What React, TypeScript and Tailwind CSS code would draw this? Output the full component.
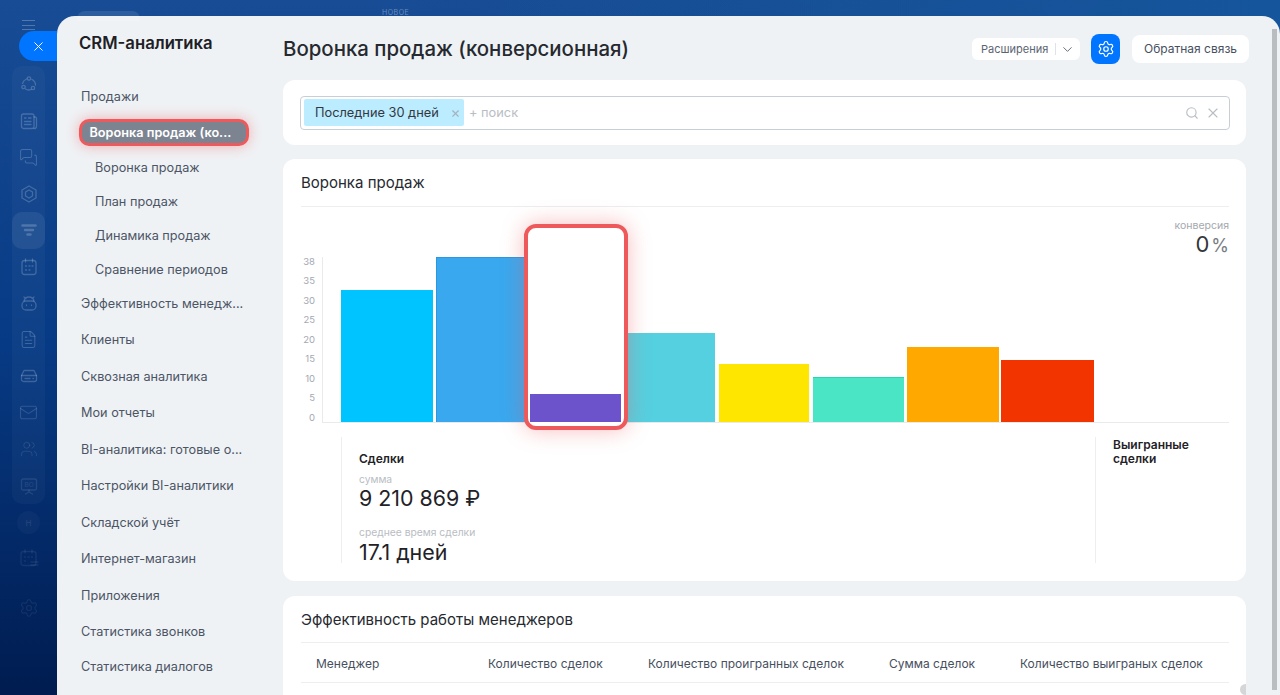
import React from "react";
import { ChevronDown, FileText, Mail, MessagesSquare, Search, Settings, Users, X } from "lucide-react";

const subs = ["Воронка продаж", "План продаж", "Динамика продаж", "Сравнение периодов"];
const navA = ["Клиенты", "Сквозная аналитика", "Мои отчеты", "BI-аналитика: готовые о...", "Настройки BI-аналитики", "Складской учёт", "Интернет-магазин", "Приложения", "Статистика звонков"];
const ticks = ["38", "35", "30", "25", "20", "15", "10", "5", "0"];

function S({ children, className = "" }: { children: React.ReactNode; className?: string }) {
  return (
    <svg viewBox="0 0 20 20" fill="none" stroke="currentColor" strokeWidth="1.3" strokeLinecap="round" strokeLinejoin="round" className={"h-[20px] w-[20px] " + className}>
      {children}
    </svg>
  );
}

function RailItem({ children, active = false }: { children: React.ReactNode; active?: boolean }) {
  return (
    <div className={"flex h-[36.5px] items-center justify-center text-white/20 " + (active ? "rounded-[10px] bg-white/[0.07]" : "")}>
      {children}
    </div>
  );
}

export default function App() {
  return (
    <div className="relative flex h-[695px] w-[1280px] overflow-hidden bg-[linear-gradient(90deg,rgba(21,85,155,0)_30%,#15559b_100%),linear-gradient(180deg,#184c94,#073a84_50%,#001c50)] font-['Inter',sans-serif]">
      <div className="absolute left-[77px] top-[11px] h-[10px] w-[63px] rounded-t-[8px] bg-white/10" />
      <div className="absolute left-[382px] top-[8px] text-[7px] leading-[9px] tracking-[0.5px] text-[#6a8bbb]">НОВОЕ</div>

      <aside className="flex w-[57px] shrink-0 flex-col pt-[20px]">
        <div className="ml-[22px] flex h-[10px] w-[13px] flex-col justify-between">
          <div className="h-px bg-white/25" />
          <div className="h-px bg-white/25" />
          <div className="h-px bg-white/25" />
        </div>
        <div className="z-10 ml-[19px] mt-px flex h-[30px] w-[38px] items-center justify-center rounded-l-full bg-[#0075ff] text-white">
          <X size={15} strokeWidth={1.6} />
        </div>
        <div className="mx-[12px] mt-[5px] rounded-[10px] bg-white/[0.03]">
          <RailItem>
            <S><circle cx="10" cy="4.5" r="1.7" /><circle cx="4.5" cy="13" r="1.7" /><circle cx="14" cy="14" r="1.7" /><path d="M7.5 5A7 7 0 0 0 3.5 9.5M13 5.5a6.500 6.500 0 0 1 3.500 5.500M6.500 15a6 6 0 0 0 5.500 0.500" /></S>
          </RailItem>
          <RailItem>
            <S><rect x="2.500" y="3" width="12.500" height="14.500" rx="2" /><path d="M15 6h1.200A1.500 1.500 0 0 1 17.500 7.500v8a2 2 0 0 1-2.500 2" /><path d="M5.500 7h1.500M9.500 7H12M5.500 10.500h6.500M5.500 13.500h6.500" /></S>
          </RailItem>
          <RailItem><MessagesSquare size={19} strokeWidth={1.3} /></RailItem>
          <RailItem>
            <S><path d="M10 2l7 4v8l-7 4-7-4V6z" /><path d="M10 6l3.500 2v4L10 14l-3.500-2V8z" /></S>
          </RailItem>
          <RailItem active>
            <S><path d="M3.500 5.500h13" strokeWidth="2.400" /><path d="M6 10h8" strokeWidth="2.400" /><path d="M8.500 14.500h3" strokeWidth="2.400" /></S>
          </RailItem>
          <RailItem>
            <S><rect x="3" y="3.500" width="14" height="14" rx="2.500" /><path d="M6.500 2v3M13.500 2v3M6.500 9h1M10 9h1M13 9h1M6.500 13h1M10 13h1" /></S>
          </RailItem>
          <RailItem>
            <S><rect x="3" y="8" width="14" height="9" rx="4" /><path d="M5 8c.5-3 2.500-4 5-4s4.500 1 5 4M5 4l2 1.500M15 4l-2 1.500M7.500 12v.5M12.500 12v.5" /></S>
          </RailItem>
          <RailItem><FileText size={19} strokeWidth={1.3} /></RailItem>
          <RailItem>
            <S><path d="M5 4.500h10l2.500 5v4a2 2 0 0 1-2 2h-11a2 2 0 0 1-2-2v-4z" /><path d="M2.500 9.500h15M6 12.500h5M14 12.500h.5" /></S>
          </RailItem>
          <RailItem><Mail size={19} strokeWidth={1.3} className="text-white/15" /></RailItem>
          <RailItem><Users size={18} strokeWidth={1.3} className="text-white/10" /></RailItem>
          <RailItem>
            <S className="text-white/10"><rect x="2.500" y="3" width="15" height="11" rx="1.500" /><path d="M10 14v2M6.500 18l3.500-2 3.500 2" /><text x="10" y="11" textAnchor="middle" fontSize="6.500" stroke="none" fill="currentColor">BO</text></S>
          </RailItem>
        </div>
        <div className="ml-[17px] mt-[7px] flex h-[23px] w-[23px] items-center justify-center rounded-full bg-white/[0.03] text-[8px] text-white/10">Н</div>
        <div className="ml-[19px] mt-[14px] text-white/[0.07]">
          <S><rect x="2" y="3.500" width="15" height="14" rx="2.500" /><path d="M6 2v3M13 2v3M5.500 9h1M9 9h1M12.500 9h1M5.500 13h1M12 14h7M12 17h7" /></S>
        </div>
        <div className="ml-[19px] mt-[30px] text-white/[0.07]"><Settings size={20} strokeWidth={1.3} /></div>
      </aside>

      <div className="mt-[16px] flex h-[679px] flex-1 overflow-hidden rounded-t-[18px] bg-[#eff2f5]">
        <nav className="w-[226px] shrink-0 text-[12.7px] text-[#4c5565]">
          <div className="ml-[22px] flex h-[56px] items-center text-[16.7px] font-semibold text-[#1d2025]">CRM-аналитика</div>
          <div className="ml-[24px] mt-[7px] flex h-[36px] items-center">Продажи</div>
          <div className="ml-[22px] mt-[4px] flex h-[27px] w-[170px] items-center rounded-[10px] border-[3.5px] border-[#ee5a5c] bg-[#7d8491] pl-[7.5px] font-semibold text-white shadow-[0_0_14px_rgba(238,90,92,0.45)]">
            Воронка продаж (ко...
          </div>
          <div className="mt-[5px]">
            {subs.map((s) => (
              <div key={s} className="ml-[38px] flex h-[34px] items-center">{s}</div>
            ))}
          </div>
          <div className="ml-[24px] flex h-[34.75px] items-center pb-px">Эффективность менедж...</div>
          {navA.map((s) => (
            <div key={s} className="ml-[24px] flex h-[36.5px] items-center">{s}</div>
          ))}
          <div className="ml-[24px] flex h-[32px] items-center">Статистика диалогов</div>
        </nav>

        <main className="w-[963px] shrink-0 text-[#1f2227]">
          <header className="flex h-[64px] items-center pt-[2px]">
            <h1 className="flex-1 text-[20.4px] font-medium text-[#26292f]">Воронка продаж (конверсионная)</h1>
            <div className="flex h-[22px] w-[108px] items-center rounded-[6px] bg-white text-[11px] text-[#5b6472]">
              <span className="pl-[9px] pr-[7px]">Расширения</span>
              <span className="h-[12px] w-px bg-[#dfe2e6]" />
              <ChevronDown size={15} strokeWidth={1.5} className="ml-[4px]" />
            </div>
            <div className="ml-[11px] flex h-[30px] w-[29px] items-center justify-center rounded-[8px] bg-[#0075ff] text-white">
              <Settings size={18} strokeWidth={1.6} />
            </div>
            <div className="-mr-[3px] ml-[12px] flex h-[28px] w-[117px] items-center justify-center rounded-[8px] bg-white text-[12px] text-[#47505e]">Обратная связь</div>
          </header>

          <section className="flex h-[65px] items-center rounded-[12px] bg-white pl-[17px] pr-[16px]">
            <div className="flex h-[34px] w-full items-center rounded-[4px] border-[1.5px] border-[#c8ced5] pl-[3px] pr-[8px]">
              <div className="flex h-[27px] w-[160px] items-center rounded-[2px] bg-[#bcecff] pl-[11px] pt-px text-[12.8px] text-[#33383f]">
                <span className="flex-1">Последние 30 дней</span>
                <X size={11} strokeWidth={2.5} className="mr-[3px] text-[#a3b4bc]" />
              </div>
              <span className="ml-[5px] flex-1 pt-px text-[12.8px] text-[#b9bdc3]">+ поиск</span>
              <Search size={14} strokeWidth={1.9} className="text-[#b9bdc3]" />
              <X size={16} strokeWidth={1.7} className="ml-[6px] text-[#b9bdc3]" />
            </div>
          </section>

          <section className="mt-[14px] h-[422px] rounded-[12px] bg-white pl-[18px] pr-[17px]">
            <div className="flex h-[48px] items-center border-b border-[#eceef0] pt-[2px] text-[15px] text-[#26292f]">Воронка продаж</div>
            <div className="h-[44px] pt-[12px] text-right">
              <div className="text-[10.5px] leading-[14px] text-[#a3a8ae]">конверсия</div>
              <div className="-mt-px text-[22px] leading-[24px] text-[#33373d]">0<span className="ml-[2px] text-[18px] text-[#777c83]">%</span></div>
            </div>
            <div className="flex h-[176px] items-end">
              <div className="w-[14px] text-right text-[9.5px] leading-[19.5px] text-[#a3a8b2]">
                {ticks.map((t) => (
                  <div key={t} className="h-[19.5px]">{t}</div>
                ))}
              </div>
              <div className="mb-[4px] ml-[7px] flex h-[166px] flex-1 items-end border-b border-l border-[#e8eaec] pl-[18px]">
                <div className="h-[132px] w-[92px] bg-[#00c4ff]" />
                <div className="ml-[3px] h-[165px] w-[91px] border-l border-t border-[#2a97e2] bg-[#39a8ef]" />
                <div className="relative z-10 ml-[3px] h-[28px] w-[91px]">
                  <div className="absolute -bottom-[8px] -left-[6px] -right-[7px] -top-[170px] rounded-[12px] border-[4px] border-[#ee5a5c] bg-white shadow-[0_0_22px_rgba(238,90,92,0.4)]" />
                  <div className="relative h-full bg-[#6c53cc]" />
                </div>
                <div className="ml-[3px] h-[89px] w-[91px] bg-[#55d0e0]" />
                <div className="ml-[4px] h-[58px] w-[90px] bg-[#ffe600]" />
                <div className="ml-[4px] h-[45px] w-[91px] border-t border-[#22d8ae] bg-[#49e5c4]" />
                <div className="ml-[3px] h-[75px] w-[92px] bg-[#ffa900]" />
                <div className="ml-[2px] h-[62px] w-[93px] bg-[#f23400]" />
              </div>
            </div>
            <div className="ml-[40px] mt-[10px] flex h-[126px]">
              <div className="w-[754px] border-l border-[#eceef0] pl-[17px] pt-[15px]">
                <div className="text-[12px] font-semibold leading-[14px] text-[#1f2227]">Сделки</div>
                <div className="mt-[6px] text-[10.3px] leading-[14px] text-[#b9bdc3]">сумма</div>
                <div className="text-[21.4px] leading-[24px] text-[#1f2227]">9 210 869 ₽</div>
                <div className="mt-[15px] text-[10.3px] leading-[14px] text-[#b9bdc3]">среднее время сделки</div>
                <div className="mt-px text-[21.4px] leading-[24px] text-[#1f2227]">17.1 дней</div>
              </div>
              <div className="flex-1 border-l border-[#eceef0] pl-[17px] pt-px text-[12px] font-semibold leading-[14px] text-[#1f2227]">Выигранные<br />сделки</div>
            </div>
          </section>

          <section className="relative mt-[15px] h-[120px] overflow-hidden rounded-[12px] bg-white pl-[18px] pr-[17px]">
            <div className="flex h-[47px] items-center border-b border-[#eceef0] pt-[2px] text-[15px] text-[#26292f]">Эффективность работы менеджеров</div>
            <div className="grid h-[40px] grid-cols-[172px_160px_241px_131px_1fr] items-center border-b border-[#eceef0] pl-[15px] pt-[2px] text-[12px] text-[#47505e]">
              <div>Менеджер</div>
              <div>Количество сделок</div>
              <div>Количество проигранных сделок</div>
              <div>Сумма сделок</div>
              <div>Количество выиграных сделок</div>
            </div>
            <div className="absolute -right-[5px] top-[88px] h-[11px] w-[11px] rounded-full bg-[#d4d6d8]" />
          </section>
        </main>

        <div className="ml-[26px] mt-[13px] h-[661px] w-[5px] bg-[#b9bdbf]" />
      </div>
    </div>
  );
}
